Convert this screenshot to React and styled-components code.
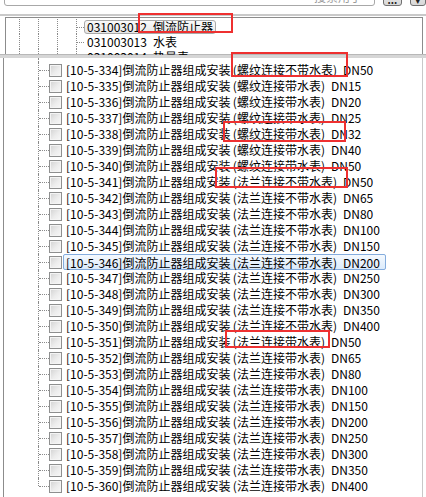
import React from 'react';
import styled, { createGlobalStyle } from 'styled-components';

const Global = createGlobalStyle`
  html, body { margin:0; padding:0; background:#fff; }
  body {
    font-family: "Noto Sans CJK SC", "DejaVu Sans", sans-serif;
    font-size:12px;
    color:#000;
  }
`

const Page = styled.div`
  position:relative;
  width:426px;
  height:497px;
  overflow:hidden;
  background:#fff;
`

const TopBar = styled.div`
  height:14px;
  display:flex;
  align-items:flex-start;
  gap:8px;
  overflow:hidden;
  border-bottom:2px solid #c9c9c9;
  padding:0 0 0 4px;
  box-sizing:content-box;
`

const Search = styled.div`
  flex:0 0 371px;
  height:20px;
  margin-top:-14px;
  box-sizing:border-box;
  border:1px solid #a8a8a8;
  border-radius:0 0 3px 3px;
  background:#fff;
  display:flex;
  justify-content:flex-end;
  align-items:flex-end;
  padding:0 12px 0 0;
  color:#9a9a9a;
  font-size:12px;
  line-height:16px;
`

const SmallButton = styled.div`
  width:${({w})=>w}px;
  height:20px;
  margin-top:-14px;
  box-sizing:border-box;
  border:1px solid #707070;
  border-radius:3px;
  background:linear-gradient(#f2f2f2,#d8d8d8);
  display:flex;
  justify-content:center;
  align-items:flex-end;
  font-size:10px;
  line-height:10px;
  color:#222;
  font-weight:bold;
`

const TopPanel = styled.div`
  margin:1px 3px 0 5px;
  height:36px;
  border:1px solid #8c8c8c;
  border-bottom:none;
  overflow:hidden;
  padding-top:1px;
`

const TreeRow = styled.div`
  display:flex;
  align-items:stretch;
  height:15px;
  padding-left:13px;
`

const Guide = styled.div`
  width:19px;
  flex:0 0 19px;
  border-left:1px dotted #8a8a8a;
  box-sizing:border-box;
`

const Connector = styled.div`
  position:relative;
  flex:0 0 ${({w})=>w}px;
  width:${({w})=>w}px;
  box-sizing:border-box;
  border-left:1px dotted #8a8a8a;
  height:100%;
  &::after{
    content:"";
    position:absolute;
    left:0;
    right:0;
    top:50%;
    border-top:1px dotted #8a8a8a;
  }
`

const NodeBox = styled.div`
  display:flex;
  align-items:center;
  height:14px;
  margin-top:1px;
  padding:0 2px 0 2px;
  box-sizing:border-box;
  border:1px solid ${({selected})=>selected ? '#a9a9a9' : 'transparent'};
  border-radius:3px;
  background:${({selected})=>selected ? 'linear-gradient(#fafafa,#e6e6e6)' : 'transparent'};
  white-space:nowrap;
  font-size:12px;
  line-height:14px;
`

const Code = styled.span`
  width:66px;
  flex:0 0 66px;
`

const Splitter = styled.div`
  height:3px;
  background:#d6d6d6;
  border-top:1px solid #b8b8b8;
  margin-top:-1px;
`

const MainPanel = styled.div`
  margin:0 3px 0 3px;
  border-left:1px solid #8c8c8c;
  border-right:1px solid #c8c8c8;
  height:440px;
`

const Lead = styled.div`
  height:4px;
  margin-left:34px;
  border-left:1px dotted #8a8a8a;
`

const Row = styled.div`
  display:flex;
  align-items:center;
  height:16px;
  padding-left:34px;
`

const RowConnector = styled.div`
  position:relative;
  align-self:flex-start;
  flex:0 0 11px;
  height:${({last})=>last ? '8px' : '16px'};
  box-sizing:border-box;
  border-left:1px dotted #8a8a8a;
  &::after{
    content:"";
    position:absolute;
    left:0;
    right:0;
    top:8px;
    border-top:1px dotted #8a8a8a;
  }
`

const Check = styled.div`
  width:13px;
  height:13px;
  flex:0 0 13px;
  box-sizing:border-box;
  border:1px solid #8e8f8f;
  background:linear-gradient(135deg,#d2d2d2 0%,#ececec 55%,#f8f8f8 100%);
  box-shadow:inset 0 0 0 1px #f4f4f4;
`

const Label = styled.div`
  margin-left:${({selected})=>selected ? '1px' : '4px'};
  height:16px;
  line-height:15px;
  white-space:nowrap;
  font-size:12px;
  padding:0 ${({selected})=>selected ? '5px 0 2px' : '0'};
  box-sizing:border-box;
  border:${({selected})=>selected ? '1px solid #84acdd' : 'none'};
  border-radius:2px;
  background:${({selected})=>selected ? 'linear-gradient(#f4f9fe,#dcebfb)' : 'transparent'};
`

const Mark = styled.div`
  position:absolute;
  left:${({x})=>x}px;
  top:${({y})=>y}px;
  width:${({w})=>w}px;
  height:${({h})=>h}px;
  box-sizing:border-box;
  border:2px solid #ee3030;
  pointer-events:none;
`

const rows = [
  [334,'螺纹连接不带水表','DN50'],
  [335,'螺纹连接带水表','DN15'],
  [336,'螺纹连接带水表','DN20'],
  [337,'螺纹连接带水表','DN25'],
  [338,'螺纹连接带水表','DN32'],
  [339,'螺纹连接带水表','DN40'],
  [340,'螺纹连接带水表','DN50'],
  [341,'法兰连接不带水表','DN50'],
  [342,'法兰连接不带水表','DN65'],
  [343,'法兰连接不带水表','DN80'],
  [344,'法兰连接不带水表','DN100'],
  [345,'法兰连接不带水表','DN150'],
  [346,'法兰连接不带水表','DN200'],
  [347,'法兰连接不带水表','DN250'],
  [348,'法兰连接不带水表','DN300'],
  [349,'法兰连接不带水表','DN350'],
  [350,'法兰连接不带水表','DN400'],
  [351,'法兰连接带水表','DN50'],
  [352,'法兰连接带水表','DN65'],
  [353,'法兰连接带水表','DN80'],
  [354,'法兰连接带水表','DN100'],
  [355,'法兰连接带水表','DN150'],
  [356,'法兰连接带水表','DN200'],
  [357,'法兰连接带水表','DN250'],
  [358,'法兰连接带水表','DN300'],
  [359,'法兰连接带水表','DN350'],
  [360,'法兰连接带水表','DN400'],
]

const topNodes = [
  ['031003012','倒流防止器',true],
  ['031003013','水表',false],
  ['031003014','热量表',false],
]

const marks = [
  {x:138,y:13,w:95,h:20},
  {x:231,y:52,w:117,h:25},
  {x:223,y:121,w:123,h:21},
  {x:215,y:167,w:133,h:21},
  {x:225,y:330,w:105,h:18},
]

const App = ()=>{
  return(
    <Page>
      <Global/>
      <TopBar>
        <Search>搜索用于</Search>
        <SmallButton w={23}>...</SmallButton>
        <SmallButton w={20}>▾</SmallButton>
      </TopBar>
      <TopPanel>
        {topNodes.map(([code,name,sel])=>(
          <TreeRow key={code}>
            <Guide/><Guide/><Guide/>
            <Connector w={8}/>
            <NodeBox selected={sel}>
              <Code>{code}</Code>
              <span>{name}</span>
            </NodeBox>
          </TreeRow>
        ))}
      </TopPanel>
      <Splitter/>
      <MainPanel>
        <Lead/>
        {rows.map(([n,kind,dn],i)=>(
          <Row key={n}>
            <RowConnector last={i===rows.length-1}/>
            <Check/>
            <Label selected={n===346}>[10-5-{n}]倒流防止器组成安装{'\u2009'}({kind}){'\u2002'}{dn}</Label>
          </Row>
        ))}
      </MainPanel>
      {marks.map((m,i)=>(<Mark key={i} {...m}/>))}
    </Page>
  )
}

export default App
